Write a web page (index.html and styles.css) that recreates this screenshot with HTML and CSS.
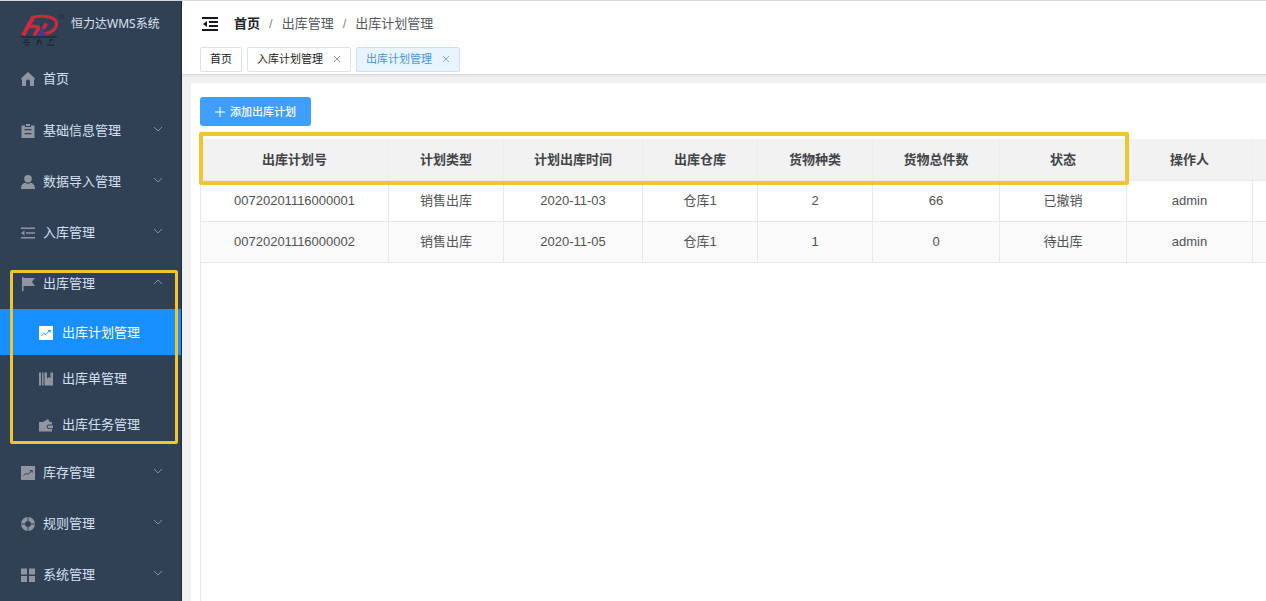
FILE: index.html
```html
<!DOCTYPE html>
<html lang="zh-CN">
<head>
<meta charset="utf-8">
<title>恒力达WMS系统</title>
<link rel="stylesheet" href="styles.css">
</head>
<body>
<svg class="sprite" aria-hidden="true">
  <symbol id="down" viewBox="0 0 10 10"><path d="M1 3l4 4 4-4" fill="none" stroke="currentColor"/></symbol>
  <symbol id="up" viewBox="0 0 10 10"><path d="M1 7l4-4 4 4" fill="none" stroke="currentColor"/></symbol>
  <symbol id="close" viewBox="0 0 8 8"><path d="M1 1l6 6M7 1L1 7" fill="none" stroke="currentColor" stroke-width=".9"/></symbol>
  <symbol id="chart" viewBox="0 0 14 14"><path d="M0 0h14v14H0z" fill="currentColor"/><path d="M2.500 9.800L5 7.300l1.800 1.200 4-4M9 4.500h2.200v2" fill="none" stroke="var(--line)"/></symbol>
</svg>
<div class="app">
  <aside class="sidebar">
    <div class="brand">
      <svg class="logo" viewBox="0 0 46 34" role="img" aria-label="恒力达">
        <g fill="none" stroke="#d2283c">
          <path d="M12.500 2.500L2 21.500" stroke-width="4"/>
          <path d="M11 3.500C23 .5 36.500 3 35.500 10.500 34.500 17 27 20.500 18 20.500" stroke-width="3"/>
          <path d="M6 12.500h9.500c2.500 0 2.500 1.500 1.500 3l-4 6" stroke-width="3.500"/>
          <path d="M25.500 9.500L22 15" stroke-width="3.500"/>
        </g>
        <path d="M22.500 14.500L18.500 20.500H25" fill="none" stroke="#453a96" stroke-width="3"/>
        <path d="M0 23h36" stroke="#17202e"/>
        <path d="M3 26h5M2 28.500h7M4 31h4M16 27h5M18.500 25l-3 6M20.500 28l-1 3M28 26h5M26 31h7M30 25l-2 4" stroke="#17202e" fill="none"/>
        <circle cx="40.500" cy="2.500" r="2" stroke="#223044" fill="none"/><path d="M40 2h1v1" stroke="#223044" fill="none"/>
      </svg>
      <span class="brand-name">恒力达WMS系统</span>
    </div>
    <nav class="menu">
      <a class="item home" href="#"><svg class="icon" viewBox="0 0 14 14"><path d="M7 0l7 6.500-1 1.200V14H9V9.500a2 2 0 0 0-4 0V14H1V7.700L0 6.500z" fill="currentColor"/></svg><span>首页</span></a>
      <a class="item" href="#"><svg class="icon" viewBox="0 0 14 14"><path fill-rule="evenodd" d="M.5 1.500H4V3h6V1.500h3.500V14H.5zM3.500 5v1.200h7V5zM3.500 9v1.200h7V9zM5 0h4v2H5z" fill="currentColor"/></svg><span>基础信息管理</span><svg class="arrow"><use href="#down"/></svg></a>
      <a class="item" href="#"><svg class="icon" viewBox="0 0 14 14"><circle cx="7" cy="3.800" r="3.800" fill="currentColor"/><path d="M0 14c0-4 2-6 4.500-6.300L7 9l2.500-1.300C12 8 14 10 14 14z" fill="currentColor"/></svg><span>数据导入管理</span><svg class="arrow"><use href="#down"/></svg></a>
      <a class="item" href="#"><svg class="icon" viewBox="0 0 14 14"><path d="M0 1.500h14v1.600H0zM5 6.200h9v1.600H5zM0 11h14v1.600H0zM3.500 4.500v5L0 7z" fill="currentColor"/></svg><span>入库管理</span><svg class="arrow"><use href="#down"/></svg></a>
      <a class="item" href="#"><svg class="icon" viewBox="0 0 14 14"><path d="M1 0h1.500v14H1zM2.500 1h11.500l-3 3.800 3 4.200H2.500z" fill="currentColor"/></svg><span>出库管理</span><svg class="arrow"><use href="#up"/></svg></a>
      <div class="submenu">
        <a class="subitem active" href="#"><svg class="icon"><use href="#chart"/></svg><span>出库计划管理</span></a>
        <a class="subitem" href="#"><svg class="icon" viewBox="0 0 14 14"><path d="M0 .5h2v13H0zM3 .5h1.500v13H3zM5.500 .5H8v6L9.800 5l1.700 1.500v-6H14v13H5.500z" fill="currentColor"/></svg><span>出库单管理</span></a>
        <a class="subitem" href="#"><svg class="icon" viewBox="0 0 14 14"><path d="M0 4h4l5-3 2 3h2v2.500h-3a2.300 2.300 0 0 0 0 4.600h3V13.500H0z" fill="currentColor"/><path d="M10 7.500h4v2.700h-4a1.300 1.300 0 0 1 0-2.700z" fill="currentColor"/></svg><span>出库任务管理</span></a>
      </div>
      <a class="item" href="#"><svg class="icon"><use href="#chart"/></svg><span>库存管理</span><svg class="arrow"><use href="#down"/></svg></a>
      <a class="item" href="#"><svg class="icon" viewBox="0 0 14 14"><circle cx="7" cy="7" r="5" fill="none" stroke="currentColor" stroke-width="4"/><path d="M7 0v4M7 10v4M0 7h4M10 7h4" stroke="#304156"/></svg><span>规则管理</span><svg class="arrow"><use href="#down"/></svg></a>
      <a class="item" href="#"><svg class="icon" viewBox="0 0 14 14"><path d="M0 .5h6v6H0zM8 .5h6v6H8zM0 8h6v6H0zM8 8h6v6H8z" fill="currentColor"/></svg><span>系统管理</span><svg class="arrow"><use href="#down"/></svg></a>
    </nav>
    <div class="mark mark-menu"></div>
  </aside>
  <div class="page">
    <header class="topbar">
      <div class="crumb-row">
        <button class="fold" type="button" aria-label="收起菜单"><svg viewBox="0 0 16 14"><path d="M0 0h16v2H0zM7 4h9v2H7zM7 8h9v2H7zM0 12h16v2H0zM5 4v6L1 7z" fill="currentColor"/></svg></button>
        <nav class="crumbs" aria-label="路径"><a class="crumb-home" href="#">首页</a><i>/</i><span>出库管理</span><i>/</i><span>出库计划管理</span></nav>
      </div>
      <div class="tabs">
        <div class="tab"><a href="#">首页</a></div>
        <div class="tab"><a href="#">入库计划管理</a><button type="button" aria-label="关闭入库计划管理"><svg><use href="#close"/></svg></button></div>
        <div class="tab current"><a href="#">出库计划管理</a><button type="button" aria-label="关闭出库计划管理"><svg><use href="#close"/></svg></button></div>
      </div>
    </header>
    <main class="card">
      <button class="add" type="button"><svg viewBox="0 0 10 10"><path d="M5 0v10M0 5h10" stroke="currentColor"/></svg>添加出库计划</button>
      <div class="table-area">
        <div class="table-wrap">
          <table>
            <colgroup><col class="c-no"><col class="c-type"><col class="c-time"><col class="c-type"><col class="c-type"><col class="c-mid"><col class="c-mid"><col class="c-user"><col></colgroup>
            <thead><tr><th>出库计划号</th><th>计划类型</th><th>计划出库时间</th><th>出库仓库</th><th>货物种类</th><th>货物总件数</th><th>状态</th><th>操作人</th><th></th></tr></thead>
            <tbody>
              <tr><td>00720201116000001</td><td>销售出库</td><td>2020-11-03</td><td>仓库1</td><td>2</td><td>66</td><td>已撤销</td><td>admin</td><td></td></tr>
              <tr><td>00720201116000002</td><td>销售出库</td><td>2020-11-05</td><td>仓库1</td><td>1</td><td>0</td><td>待出库</td><td>admin</td><td></td></tr>
            </tbody>
          </table>
        </div>
        <div class="mark mark-head"></div>
      </div>
    </main>
  </div>
</div>
</body>
</html>
```

FILE: styles.css
```css
* { box-sizing: border-box; }
body {
  margin: 0;
  font: 13px/20px "Liberation Sans", "Noto Sans CJK SC", sans-serif;
  color: #505256;
  overflow: hidden;
}
a { color: inherit; text-decoration: none; }
button { font: inherit; color: inherit; border: 0; padding: 0; background: none; cursor: pointer; }
svg { display: block; flex: none; }
.sprite { position: absolute; width: 0; height: 0; }
.app { display: flex; min-height: 100vh; border-top: 1px solid #d4d6d8; }

.sidebar {
  position: relative;
  flex: none;
  width: 182px;
  background: #304156;
  border-right: 1px solid #1c2a40;
}
.brand { display: flex; height: 52px; padding: 13px 0 0 21px; gap: 4px; }
.logo { width: 46px; height: 34px; }
.brand-name { font: 12px/20px "Noto Sans", "Noto Sans CJK SC", sans-serif; color: #dde3ea; white-space: nowrap; }
.menu { color: #d3e0f0; }
.item, .subitem { display: flex; align-items: center; }
.item { height: 51px; padding: 0 18px 0 21px; gap: 8px; }
.home { height: 52px; }
.icon { --line: #304156; width: 14px; height: 14px; color: #9095a0; }
.arrow { width: 10px; height: 10px; margin: 0 0 4px auto; color: #8490a0; }
.subitem { height: 46px; padding: 1px 0 0 39px; gap: 9px; }
.active { background: #1890ff; color: #fff; }
.active .icon { --line: #1890ff; color: #fff; }

.mark { position: absolute; border: 3px solid #f0c62c; border-radius: 2px; pointer-events: none; }
.mark-menu { left: 10px; top: 269px; width: 168px; height: 174px; }
.mark-head { left: -1px; top: -7px; width: 930px; height: 53px; border-width: 4px; }

.page { flex: 1; min-width: 0; display: flex; flex-direction: column; background: #f1f1f1; }
.topbar {
  padding: 0 18px 2px;
  background: #fff;
  border-bottom: 1px solid #d8d8d8;
  box-shadow: 0 1px 2px #dedede;
}
.crumb-row { display: flex; align-items: center; height: 46px; padding-left: 2px; gap: 16px; }
.fold { color: #17181c; }
.fold svg { width: 16px; height: 14px; }
.crumbs { display: flex; color: #55585d; }
.crumbs i { margin: 0 9px; font-style: normal; color: #85888e; }
.crumb-home { font-weight: bold; color: #222428; }
.tabs { display: flex; gap: 5px; }
.tab {
  display: flex;
  align-items: center;
  gap: 10px;
  height: 25px;
  padding: 0 9px 1px;
  border: 1px solid #dce1ea;
  border-radius: 2px;
  font-size: 11px;
  color: #222;
}
.tab button { color: #8c929c; }
.tab svg { width: 8px; height: 8px; }
.tab.current { background: #e8f4ff; border-color: #c9e2f8; color: #4c96d8; }
.tab.current button { color: #7ca4c8; }

.card {
  flex: 1;
  display: flex;
  flex-direction: column;
  align-items: flex-start;
  gap: 13px;
  margin: 8px 0 0 9px;
  padding: 14px 0 0 9px;
  background: #fff;
}
.add {
  display: flex;
  align-items: center;
  gap: 5px;
  height: 29px;
  padding: 0 15px;
  border-radius: 3px;
  background: #409eff;
  color: #fff;
  font-size: 11px;
  font-weight: 500;
}
.add svg { width: 10px; height: 10px; }
.table-area { position: relative; flex: 1; width: 100%; }
.table-wrap { height: 100%; overflow: hidden; border-left: 1px solid #e6e9f0; }
table { width: 100%; min-width: 1060px; table-layout: fixed; border-collapse: separate; border-spacing: 0; }
.c-no { width: 188px; }
.c-type { width: 115px; }
.c-time { width: 139px; }
.c-mid { width: 127px; }
.c-user { width: 126px; }
th, td {
  height: 41px;
  padding: 0;
  text-align: center;
  border-right: 1px solid #e6e9f0;
  border-bottom: 1px solid #e6e9f0;
}
th { height: 42px; background: #f2f2f2; color: #424448; font-weight: bold; border-right-color: #eaecf0; }
th:last-child, td:last-child { border-right: 0; }
tbody tr:nth-child(2) td { background: #fafafa; }
```
